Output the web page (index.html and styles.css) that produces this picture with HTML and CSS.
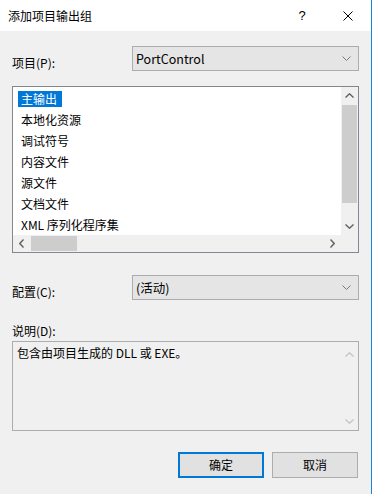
FILE: index.html
```html
<!DOCTYPE html>
<html lang="zh-CN">
<head>
<meta charset="utf-8">
<title>添加项目输出组</title>
<link rel="stylesheet" href="styles.css">
</head>
<body>
<div class="window">
  <div class="titlebar">
    <div class="title">添加项目输出组</div>
    <div class="tbtn help">?</div>
    <div class="tbtn close">
      <svg width="10" height="10" viewBox="0 0 10 10"><path d="M0.5 0.5 L9.5 9.5 M9.5 0.5 L0.5 9.5" stroke="#000" stroke-width="1" fill="none"/></svg>
    </div>
  </div>
  <div class="content">
    <div class="row row-project">
      <div class="label">项目(P):</div>
      <div class="combo">
        <span class="combo-text">PortControl</span>
        <svg class="combo-arrow" width="9" height="5" viewBox="0 0 9 5"><path d="M0.5 0.5 L4.5 4.5 L8.5 0.5" stroke="#7a7a7a" stroke-width="1" fill="none"/></svg>
      </div>
    </div>

    <div class="listbox">
      <div class="items">
        <div class="item"><span class="sel">主输出</span></div>
        <div class="item"><span>本地化资源</span></div>
        <div class="item"><span>调试符号</span></div>
        <div class="item"><span>内容文件</span></div>
        <div class="item"><span>源文件</span></div>
        <div class="item"><span>文档文件</span></div>
        <div class="item"><span>XML 序列化程序集</span></div>
      </div>
      <div class="vscroll">
        <div class="sbtn"><svg width="9" height="5" viewBox="0 0 9 5"><path d="M0.5 4.5 L4.5 0.8 L8.5 4.5" stroke="#606060" stroke-width="1.4" fill="none"/></svg></div>
        <div class="vthumb"></div>
        <div class="vspace"></div>
        <div class="sbtn"><svg width="9" height="5" viewBox="0 0 9 5"><path d="M0.5 0.5 L4.5 4.2 L8.5 0.5" stroke="#606060" stroke-width="1.4" fill="none"/></svg></div>
      </div>
      <div class="hscroll">
        <div class="sbtn"><svg width="5" height="9" viewBox="0 0 5 9"><path d="M4.5 0.5 L0.8 4.5 L4.5 8.5" stroke="#606060" stroke-width="1.4" fill="none"/></svg></div>
        <div class="hthumb"></div>
        <div class="hspace"></div>
        <div class="sbtn"><svg width="5" height="9" viewBox="0 0 5 9"><path d="M0.5 0.5 L4.2 4.5 L0.5 8.5" stroke="#606060" stroke-width="1.4" fill="none"/></svg></div>
      </div>
      <div class="corner"></div>
    </div>

    <div class="row row-config">
      <div class="label">配置(C):</div>
      <div class="combo">
        <span class="combo-text">(活动)</span>
        <svg class="combo-arrow" width="9" height="5" viewBox="0 0 9 5"><path d="M0.5 0.5 L4.5 4.5 L8.5 0.5" stroke="#7a7a7a" stroke-width="1" fill="none"/></svg>
      </div>
    </div>

    <div class="desc-label">说明(D):</div>
    <div class="desc">
      <div class="desc-text">包含由项目生成的 DLL 或 EXE。</div>
      <div class="desc-scroll">
        <div class="sbtn"><svg width="9" height="5" viewBox="0 0 9 5"><path d="M0.5 4.5 L4.5 0.8 L8.5 4.5" stroke="#c2c2c2" stroke-width="1.2" fill="none"/></svg></div>
        <div class="sbtn"><svg width="9" height="5" viewBox="0 0 9 5"><path d="M0.5 0.5 L4.5 4.2 L8.5 0.5" stroke="#c2c2c2" stroke-width="1.2" fill="none"/></svg></div>
      </div>
    </div>

    <div class="buttons">
      <div class="btn btn-default">确定</div>
      <div class="btn">取消</div>
    </div>
  </div>
</div>
</body>
</html>
```

FILE: styles.css
```css
html, body {
  margin: 0;
  padding: 0;
  background: #f0f0f0;
}
body {
  font-family: "Noto Sans CJK SC", "Noto Sans", sans-serif;
  font-size: 12px;
  color: #000;
}
.window {
  width: 371px;
  height: 494px;
  border-right: 1px solid #1883d7;
  background: #f0f0f0;
  overflow: hidden;
}
.titlebar {
  height: 31px;
  background: #fff;
  display: flex;
  align-items: center;
}
.title {
  flex: 1;
  padding-left: 8px;
  font-size: 12px;
  line-height: 16px;
}
.tbtn {
  width: 46px;
  height: 31px;
  display: flex;
  align-items: center;
  justify-content: center;
}
.help {
  font-family: "Liberation Sans", sans-serif;
  font-size: 13px;
}
.content {
  padding: 0 12px 0 12px;
}
.row {
  display: flex;
  align-items: flex-start;
  height: 25px;
}
.row-project { margin-top: 15px; }
.row-config { margin-top: 22px; }
.label {
  width: 120px;
  padding-top: 9px;
  line-height: 16px;
}
.combo {
  flex: 1;
  height: 23px;
  border: 1px solid #adadad;
  background: #e5e5e5;
  display: flex;
  align-items: center;
  padding: 0 7px 0 3px;
}
.combo-text {
  flex: 1;
  line-height: 16px;
  font-size: 12.5px;
}
.listbox {
  margin-top: 15px;
  height: 165px;
  border: 1px solid #828790;
  background: #fff;
  display: grid;
  grid-template-columns: 1fr 17px;
  grid-template-rows: 1fr 17px;
}
.items {
  padding-top: 1px;
  overflow: hidden;
}
.item {
  height: 21px;
  display: flex;
  align-items: center;
  padding-left: 5px;
}
.item span {
  display: inline-block;
  line-height: 16px;
  padding: 0 5px 0 3px;
  white-space: nowrap;
}
.item .sel {
  background: #0078d7;
  color: #fff;
}
.vscroll {
  background: #f0f0f0;
  display: flex;
  flex-direction: column;
}
.sbtn {
  width: 17px;
  height: 17px;
  flex: none;
  display: flex;
  align-items: center;
  justify-content: center;
}
.vthumb {
  height: 98px;
  margin: 1px 1px 0 1px;
  background: #cdcdcd;
}
.vspace { flex: 1; }
.hscroll {
  background: #f0f0f0;
  display: flex;
}
.hthumb {
  width: 46px;
  margin: 1px 0 1px 1px;
  background: #cdcdcd;
}
.hspace { flex: 1; }
.corner { background: #f0f0f0; }
.desc-label {
  margin-top: 23px;
  line-height: 16px;
}
.desc {
  margin-top: 2px;
  height: 88px;
  border: 1px solid #adadad;
  background: #f0f0f0;
  display: flex;
}
.desc-text {
  flex: 1;
  padding: 3px 0 0 4px;
  line-height: 16px;
}
.desc-scroll {
  width: 17px;
  display: flex;
  flex-direction: column;
  justify-content: space-between;
  padding: 4px 0 0 0;
}
.buttons {
  margin-top: 21px;
  display: flex;
  justify-content: flex-end;
  gap: 8px;
  padding-right: 1px;
}
.btn {
  width: 84px;
  height: 24px;
  border: 1px solid #adadad;
  background: #e1e1e1;
  display: flex;
  align-items: center;
  justify-content: center;
  line-height: 16px;
}
.btn-default {
  width: 82px;
  height: 22px;
  border: 2px solid #0078d7;
}
```
